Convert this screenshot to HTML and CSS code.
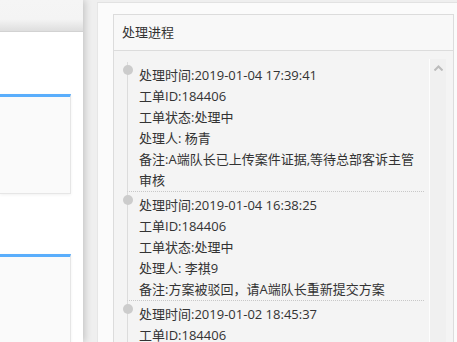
FILE: index.html
```html
<!DOCTYPE html>
<html lang="zh">
<head>
<meta charset="utf-8">
<link rel="stylesheet" href="styles.css">
</head>
<body>
<div class="page">
  <aside class="side">
    <div class="side-top"></div>
    <div class="side-body">
      <div class="mini-card"></div>
      <div class="mini-card"></div>
    </div>
  </aside>
  <main class="main">
    <section class="card">
      <header class="card-head">处理进程</header>
      <div class="card-body">
        <div class="scroller">
          <ul class="timeline">
            <li class="item">
              <p>处理时间:2019-01-04 17:39:41</p>
              <p>工单ID:184406</p>
              <p>工单状态:处理中</p>
              <p>处理人: 杨青</p>
              <p>备注:A端队长已上传案件证据,等待总部客诉主管审核</p>
            </li>
            <li class="item">
              <p>处理时间:2019-01-04 16:38:25</p>
              <p>工单ID:184406</p>
              <p>工单状态:处理中</p>
              <p>处理人: 李祺9</p>
              <p>备注:方案被驳回，请A端队长重新提交方案</p>
            </li>
            <li class="item">
              <p>处理时间:2019-01-02 18:45:37</p>
              <p>工单ID:184406</p>
              <p>工单状态:处理中</p>
              <p>处理人: 李祺9</p>
            </li>
          </ul>
          <div class="scrollbar">
            <svg class="arrow" width="9" height="6" viewBox="0 0 9 6"><path d="M0.5 5.5 L4.5 1.5 L8.5 5.5" fill="none" stroke="#bcbcbc" stroke-width="2"/></svg>
          </div>
        </div>
      </div>
    </section>
  </main>
</div>
</body>
</html>
```
FILE: styles.css
```css
html, body {
  margin: 0;
  padding: 0;
  height: 342px;
  overflow: hidden;
}
body {
  background: #efefef;
  font-family: "Open Sans", "Noto Sans CJK SC", sans-serif;
  font-size: 13px;
  color: #333;
}
.page {
  display: flex;
  gap: 14px;
  height: 342px;
}
.side {
  width: 83px;
  flex: none;
  background: #fff;
  box-shadow: 2px 0 7px rgba(0,0,0,0.18);
  display: flex;
  flex-direction: column;
}
.side-top {
  height: 31px;
  flex: none;
  background: linear-gradient(#f5f5f5 0, #f4f4f4 62%, #dedede 100%);
  border-bottom: 1px solid #d2d2d2;
}
.side-body {
  display: flex;
  flex-direction: column;
  gap: 60px;
  padding-top: 62px;
}
.mini-card {
  width: 70px;
  height: 96px;
  flex: none;
  background: #fafafa;
  border-top: 3px solid #5aaefc;
  border-right: 1px solid #e6e6e6;
  border-bottom: 1px solid #e6e6e6;
  box-shadow: 0 1px 3px rgba(0,0,0,0.06);
}
.main {
  flex: 1;
  margin-top: 2px;
  background: #fbfbfb;
  border-top: 1px solid #e2e2e2;
  border-left: 1px solid #e6e6e6;
  padding: 11px 3px 0 15px;
  min-width: 0;
}
.card {
  border: 1px solid #dcdcdc;
  background: #f4f4f4;
  height: 400px;
}
.card-head {
  height: 35px;
  line-height: 35px;
  padding-left: 8px;
  background: #f8f8f8;
  border-bottom: 1px solid #dcdcdc;
  color: #333;
}
.card-body {
  padding: 8px 7px 0 7px;
}
.scroller {
  display: flex;
  height: 320px;
}
.timeline {
  list-style: none;
  margin: 0;
  padding: 3px 5px 0 6px;
  flex: 1;
  min-width: 0;
}
.item {
  position: relative;
  border-left: 1px solid #dcdcdc;
  border-bottom: 1px dotted #c8c8c8;
  padding: 3px 0 0 11px;
}
.item::before {
  content: "";
  position: absolute;
  left: -5px;
  top: 3px;
  width: 10px;
  height: 10px;
  border-radius: 50%;
  background: #cccccc;
}
.item p {
  margin: 0;
  line-height: 21px;
}
.scrollbar {
  width: 17px;
  flex: none;
  background: #f0f0f0;
  border-left: 1px solid #fdfdfd;
  display: flex;
  justify-content: center;
  padding-top: 6px;
  box-sizing: border-box;
}
.arrow {
  display: block;
}
```
